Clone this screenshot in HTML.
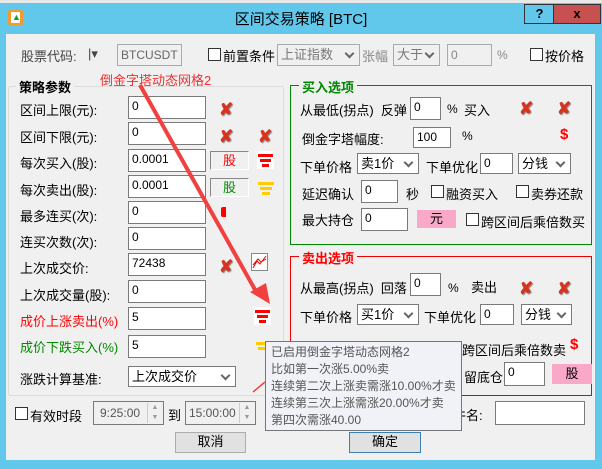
<!DOCTYPE html><html><head><meta charset="utf-8"><style>
*{margin:0;padding:0;box-sizing:border-box}
body{width:602px;height:469px;overflow:hidden;background:#fff;font-family:"Liberation Sans","Noto Sans CJK SC",sans-serif;font-size:13px;color:#000;position:relative}
.a{position:absolute;white-space:nowrap}
.in{position:absolute;background:#fff;border:1px solid #7a7a7a;font-size:12px;padding:1px 3px;line-height:16px}
.cb{position:absolute;width:13px;height:13px;border:1px solid #333;background:#fff}
.sel{position:absolute;background:#fff;border:1px solid #7a7a7a;font-size:13px;padding:0 3px;line-height:19px;overflow:hidden}
.sel:after{content:"";position:absolute;right:6px;top:5px;width:5px;height:5px;border-right:2px solid #666;border-bottom:2px solid #666;transform:rotate(45deg)}
.x{position:absolute;color:#d8331e;font-weight:bold;font-size:17px;line-height:17px;text-shadow:1px 1px 1px #888}
.btn{position:absolute;background:#e1e1e1;border:1px solid #adadad;text-align:center;line-height:18px;font-size:13px}
</style></head><body>
<div class="a" style="left:0;top:0;width:602px;height:3px;background:#e8e8e8"></div>
<div class="a" style="left:0;top:3px;width:602px;height:466px;background:#62c8eb"></div>
<div class="a" style="left:8px;top:10px;width:15px;height:15px;background:#f39a2c;border-radius:2px"></div>
<div class="a" style="left:11px;top:12px;width:9px;height:11px;background:#fff;border-radius:1px"></div>
<div class="a" style="left:12px;top:13px;color:#1a9a3a;font-size:9px;line-height:9px">▲</div>
<div class="a" style="left:0;top:8px;width:602px;text-align:center;font-size:15px">区间交易策略 [BTC]</div>
<div class="a" style="left:524px;top:4px;width:30px;height:20px;border:1px solid #333;border-right:none;text-align:center;font-weight:bold;line-height:18px">?</div>
<div class="a" style="left:553px;top:4px;width:48px;height:20px;background:#c75050;border:1px solid #333;text-align:center;font-weight:bold;line-height:18px">x</div>
<div class="a" style="left:6px;top:34px;width:589px;height:426px;background:#f0f0f0"></div>

<div class="a" style="left:21px;top:46px;color:#444">股票代码:</div>
<div class="a" style="left:88px;top:46px;color:#444">|▾</div>
<div class="in" style="left:117px;top:44px;width:65px;height:22px;background:#f0f0f0;color:#666;border-color:#aaa;line-height:18px">BTCUSDT</div>
<div class="cb" style="left:208px;top:48px"></div><div class="a" style="left:223px;top:46px">前置条件</div>
<div class="sel" style="left:277px;top:44px;width:83px;height:22px;background:#f0f0f0;color:#777;border-color:#aaa">上证指数</div>
<div class="a" style="left:362px;top:46px;color:#888">张幅</div>
<div class="sel" style="left:393px;top:44px;width:47px;height:22px;background:#f0f0f0;color:#777;border-color:#aaa">大于</div>
<div class="in" style="left:447px;top:44px;width:45px;height:22px;background:#f0f0f0;color:#888;border-color:#aaa;line-height:18px">0</div>
<div class="a" style="left:497px;top:48px;color:#888;font-size:12px">%</div>
<div class="cb" style="left:530px;top:48px"></div><div class="a" style="left:545px;top:46px">按价格</div>

<div class="a" style="left:8px;top:86px;width:276px;height:310px;border:1px solid #dcdcdc;border-radius:2px"></div>
<div class="a" style="left:16px;top:77px;background:#f0f0f0;padding:0 3px;font-weight:bold;font-size:13px">策略参数</div>
<div class="a" style="left:100px;top:70px;color:#f03030;font-size:13px">倒金字塔动态网格2</div>

<div class="a" style="left:20px;top:100px">区间上限(元):</div><div class="in" style="left:128px;top:96px;width:78px;height:23px">0</div>
<div class="a" style="left:20px;top:127px">区间下限(元):</div><div class="in" style="left:128px;top:122px;width:78px;height:23px">0</div>
<div class="a" style="left:20px;top:153px">每次买入(股):</div><div class="in" style="left:128px;top:149px;width:78px;height:23px">0.0001</div>
<div class="a" style="left:20px;top:180px">每次卖出(股):</div><div class="in" style="left:128px;top:175px;width:78px;height:23px">0.0001</div>
<div class="a" style="left:20px;top:206px">最多连买(次):</div><div class="in" style="left:128px;top:201px;width:78px;height:23px">0</div>
<div class="a" style="left:20px;top:232px">连买次数(次):</div><div class="in" style="left:128px;top:227px;width:78px;height:23px">0</div>
<div class="a" style="left:20px;top:258px">上次成交价:</div><div class="in" style="left:128px;top:253px;width:78px;height:23px">72438</div>
<div class="a" style="left:20px;top:285px">上次成交量(股):</div><div class="in" style="left:128px;top:280px;width:78px;height:23px">0</div>
<div class="a" style="left:20px;top:311px;color:#f00">成价上涨卖出(%)</div><div class="in" style="left:128px;top:307px;width:78px;height:23px">5</div>
<div class="a" style="left:20px;top:337px;color:#080">成价下跌买入(%)</div><div class="in" style="left:128px;top:335px;width:78px;height:23px">5</div>
<div class="a" style="left:20px;top:369px">涨跌计算基准:</div>
<div class="sel" style="left:128px;top:366px;width:108px;height:21px">上次成交价</div>

<div class="x" style="left:219px;top:101px">✘</div>
<div class="x" style="left:219px;top:128px">✘</div><div class="x" style="left:258px;top:128px">✘</div>
<div class="a" style="left:210px;top:151px;width:39px;height:19px;border:1px solid #888;border-right-color:#fff;border-bottom-color:#fff;color:#f00;text-align:center;line-height:17px">股</div>
<div class="a" style="left:210px;top:178px;width:39px;height:19px;border:1px solid #888;border-right-color:#fff;border-bottom-color:#fff;color:#080;text-align:center;line-height:17px">股</div>
<svg class="a" style="left:257px;top:151px" width="17" height="18"><rect width="17" height="18" fill="#fff"/><rect x="1" y="3" width="15" height="3" fill="#f00"/><rect x="3" y="8" width="11" height="3" fill="#f00"/><rect x="5" y="13" width="7" height="3" fill="#f00"/></svg>
<svg class="a" style="left:258px;top:181px" width="16" height="16"><rect x="0" y="1" width="16" height="3" fill="#fc0"/><rect x="2" y="6" width="12" height="3" fill="#fc0"/><rect x="4" y="11" width="8" height="3" fill="#fc0"/></svg>
<div class="a" style="left:221px;top:207px;width:5px;height:10px;background:#f00;border-radius:2px 0 0 2px"></div>
<div class="x" style="left:219px;top:258px">✘</div>
<svg class="a" style="left:251px;top:253px" width="17" height="18"><rect x=".5" y=".5" width="16" height="17" fill="#fff" stroke="#888"/><path d="M2 15L6 8L9 11L15 3M2 12L7 6L10 9L15 6" stroke="#e00" fill="none"/></svg>
<svg class="a" style="left:254px;top:307px" width="17" height="18"><rect width="17" height="18" fill="#fff"/><rect x="1" y="3" width="15" height="3" fill="#f00"/><rect x="3" y="8" width="11" height="3" fill="#f00"/><rect x="5" y="13" width="7" height="3" fill="#f00"/></svg>
<svg class="a" style="left:256px;top:341px" width="16" height="16"><rect x="0" y="1" width="16" height="3" fill="#fc0"/><rect x="2" y="6" width="12" height="3" fill="#fc0"/></svg>

<!-- buy group -->
<div class="a" style="left:290px;top:85px;width:302px;height:160px;border:1px solid #080"></div>
<div class="a" style="left:299px;top:77px;background:#f0f0f0;padding:0 3px;color:#080;font-weight:bold">买入选项</div>
<div class="a" style="left:300px;top:100px">从最低(拐点)&nbsp; 反弹</div>
<div class="in" style="left:410px;top:97px;width:31px;height:23px">0</div>
<div class="a" style="left:447px;top:102px;font-size:12px">%</div><div class="a" style="left:464px;top:100px">买入</div>
<div class="x" style="left:519px;top:100px">✘</div><div class="x" style="left:557px;top:100px">✘</div>
<div class="a" style="left:302px;top:129px">倒金字塔幅度:</div>
<div class="in" style="left:413px;top:127px;width:38px;height:21px">100</div>
<div class="a" style="left:462px;top:129px;font-size:12px">%</div>
<div class="a" style="left:560px;top:126px;color:#f00;font-weight:bold;font-size:15px">$</div>
<div class="a" style="left:300px;top:157px">下单价格</div>
<div class="sel" style="left:357px;top:153px;width:62px;height:21px">卖1价</div>
<div class="a" style="left:426px;top:157px">下单优化</div>
<div class="in" style="left:480px;top:153px;width:33px;height:21px">0</div>
<div class="sel" style="left:518px;top:153px;width:53px;height:21px">分钱</div>
<div class="a" style="left:302px;top:184px">延迟确认</div>
<div class="in" style="left:361px;top:180px;width:37px;height:23px">0</div>
<div class="a" style="left:406px;top:184px">秒</div>
<div class="cb" style="left:431px;top:185px"></div><div class="a" style="left:446px;top:184px">融资买入</div>
<div class="cb" style="left:516px;top:185px"></div><div class="a" style="left:531px;top:184px">卖券还款</div>
<div class="a" style="left:302px;top:210px">最大持仓</div>
<div class="in" style="left:361px;top:208px;width:47px;height:23px">0</div>
<div class="a" style="left:417px;top:210px;width:39px;height:18px;background:#f9a8c7;text-align:center;line-height:18px">元</div>
<div class="cb" style="left:466px;top:213px"></div><div class="a" style="left:481px;top:212px">跨区间后乘倍数买</div>

<!-- sell group -->
<div class="a" style="left:290px;top:256px;width:302px;height:140px;border:1px solid #e00"></div>
<div class="a" style="left:299px;top:248px;background:#f0f0f0;padding:0 3px;color:#f00;font-weight:bold">卖出选项</div>
<div class="a" style="left:300px;top:278px">从最高(拐点)&nbsp; 回落</div>
<div class="in" style="left:410px;top:273px;width:31px;height:23px">0</div>
<div class="a" style="left:448px;top:281px;font-size:12px">%</div><div class="a" style="left:471px;top:277px">卖出</div>
<div class="x" style="left:519px;top:280px">✘</div><div class="x" style="left:557px;top:280px">✘</div>
<div class="a" style="left:300px;top:307px">下单价格</div>
<div class="sel" style="left:357px;top:304px;width:62px;height:21px">买1价</div>
<div class="a" style="left:424px;top:307px">下单优化</div>
<div class="in" style="left:480px;top:304px;width:34px;height:21px">0</div>
<div class="sel" style="left:521px;top:304px;width:51px;height:21px">分钱</div>
<div class="a" style="left:462px;top:340px">跨区间后乘倍数卖</div>
<div class="a" style="left:570px;top:336px;color:#f00;font-weight:bold;font-size:15px">$</div>
<div class="a" style="left:464px;top:367px">留底仓</div>
<div class="in" style="left:504px;top:362px;width:41px;height:24px">0</div>
<div class="a" style="left:552px;top:364px;width:40px;height:20px;background:#f9a8c7;text-align:center;line-height:20px">股</div>

<!-- bottom -->
<div class="cb" style="left:15px;top:407px"></div><div class="a" style="left:30px;top:406px">有效时段</div>
<div class="in" style="left:93px;top:401px;width:71px;height:24px;background:#f0f0f0;color:#555;padding-left:6px;line-height:20px">9:25:00</div>
<div class="a" style="left:147px;top:403px;width:15px;height:20px;border-left:1px solid #ccc;color:#999;font-size:7px;line-height:10px;text-align:center">▲<br>▼</div>
<div class="a" style="left:168px;top:405px">到</div>
<div class="in" style="left:185px;top:401px;width:71px;height:24px;background:#f0f0f0;color:#555;line-height:20px">15:00:00</div>
<div class="a" style="left:239px;top:403px;width:15px;height:20px;border-left:1px solid #ccc;color:#999;font-size:7px;line-height:10px;text-align:center">▲<br>▼</div>
<div class="a" style="left:453px;top:405px">件名:</div>
<div class="in" style="left:495px;top:401px;width:90px;height:24px"></div>
<div class="btn" style="left:175px;top:432px;width:71px;height:21px">取消</div>
<div class="btn" style="left:349px;top:432px;width:72px;height:21px;border-color:#3c7fb1">确定</div>

<!-- arrows -->
<svg class="a" style="left:0;top:0" width="602" height="469"><line x1="140" y1="85" x2="258" y2="295" stroke="#f04040" stroke-width="4"/><polygon points="250,292 270,304 266,283" fill="#f04040"/><line x1="253" y1="392" x2="265" y2="382" stroke="#f04040" stroke-width="1.5"/></svg>

<!-- tooltip -->
<div class="a" style="left:265px;top:341px;width:197px;height:90px;background:#f1f2f7;border:1px solid #767676;padding:2px 5px;color:#555;font-size:12px;line-height:17px">已启用倒金字塔动态网格2<br>比如第一次涨5.00%卖<br>连续第二次上涨卖需涨10.00%才卖<br>连续第三次上涨需涨20.00%才卖<br>第四次需涨40.00</div>
</body></html>
